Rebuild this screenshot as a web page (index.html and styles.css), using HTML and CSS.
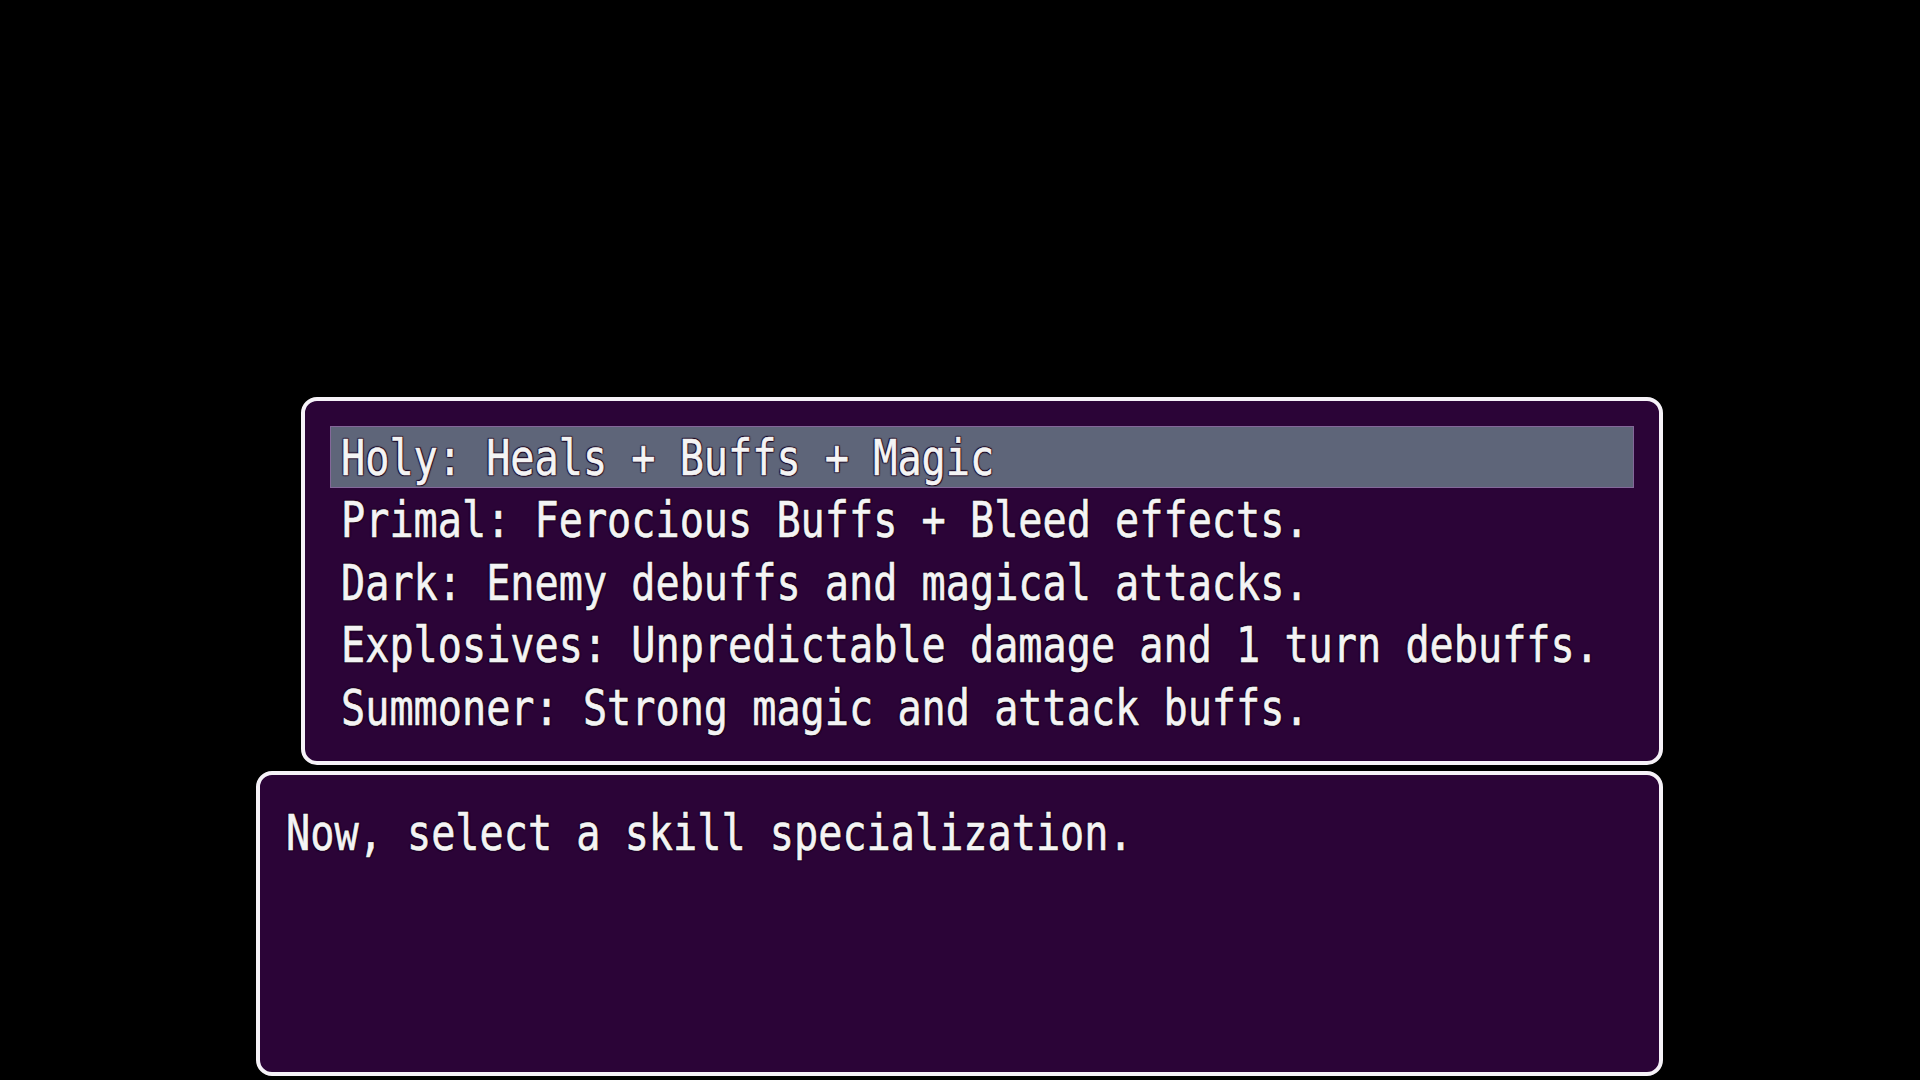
FILE: index.html
```html
<!DOCTYPE html>
<html>
<head>
<meta charset="utf-8">
<link rel="stylesheet" href="styles.css">
</head>
<body>
<div class="stage">
  <div class="window choices">
    <div class="row selected"><span class="txt">Holy: Heals + Buffs + Magic</span></div>
    <div class="row"><span class="txt">Primal: Ferocious Buffs + Bleed effects.</span></div>
    <div class="row"><span class="txt">Dark: Enemy debuffs and magical attacks.</span></div>
    <div class="row"><span class="txt">Explosives: Unpredictable damage and 1 turn debuffs.</span></div>
    <div class="row"><span class="txt">Summoner: Strong magic and attack buffs.</span></div>
  </div>
  <div class="window message">
    <div class="row"><span class="txt">Now, select a skill specialization.</span></div>
  </div>
</div>
</body>
</html>
```
FILE: styles.css
```css
html, body {
  margin: 0;
  padding: 0;
  background: #000;
  width: 1920px;
  height: 1080px;
  overflow: hidden;
}
.stage {
  display: flex;
  flex-direction: column;
  align-items: flex-end;
  width: 1407px;
  margin-left: 256px;
  padding-top: 397px;
  gap: 6px;
}
.window {
  box-sizing: border-box;
  background: #2b0437;
  border: 4px solid #f6f2f8;
  border-radius: 16px;
  font-family: "DejaVu Sans Mono", monospace;
  font-size: 49px;
  color: #f4f4f4;
}
.choices {
  width: 1362px;
  height: 368px;
  padding: 25px 25px 23px 25px;
}
.message {
  width: 1407px;
  height: 305px;
  padding: 26px 24px 24px 26px;
}
.row {
  height: 62.4px;
  line-height: 62.4px;
  white-space: nowrap;
  box-sizing: border-box;
}
.choices .row {
  padding-left: 11px;
}
.row.selected {
  background: #5e6579;
  box-shadow: inset 0 0 0 1px #84689a;
}
.txt {
  display: inline-block;
  position: relative;
  top: 2px;
  transform: scaleX(0.82);
  transform-origin: 0 50%;
  -webkit-text-stroke: 0.6px #f4f4f4;
  text-shadow: 0 0 2px #1a0520, 1px 1px 1px #1a0520, -1px -1px 1px #1a0520, 1px -1px 1px #1a0520, -1px 1px 1px #1a0520;
}
```
